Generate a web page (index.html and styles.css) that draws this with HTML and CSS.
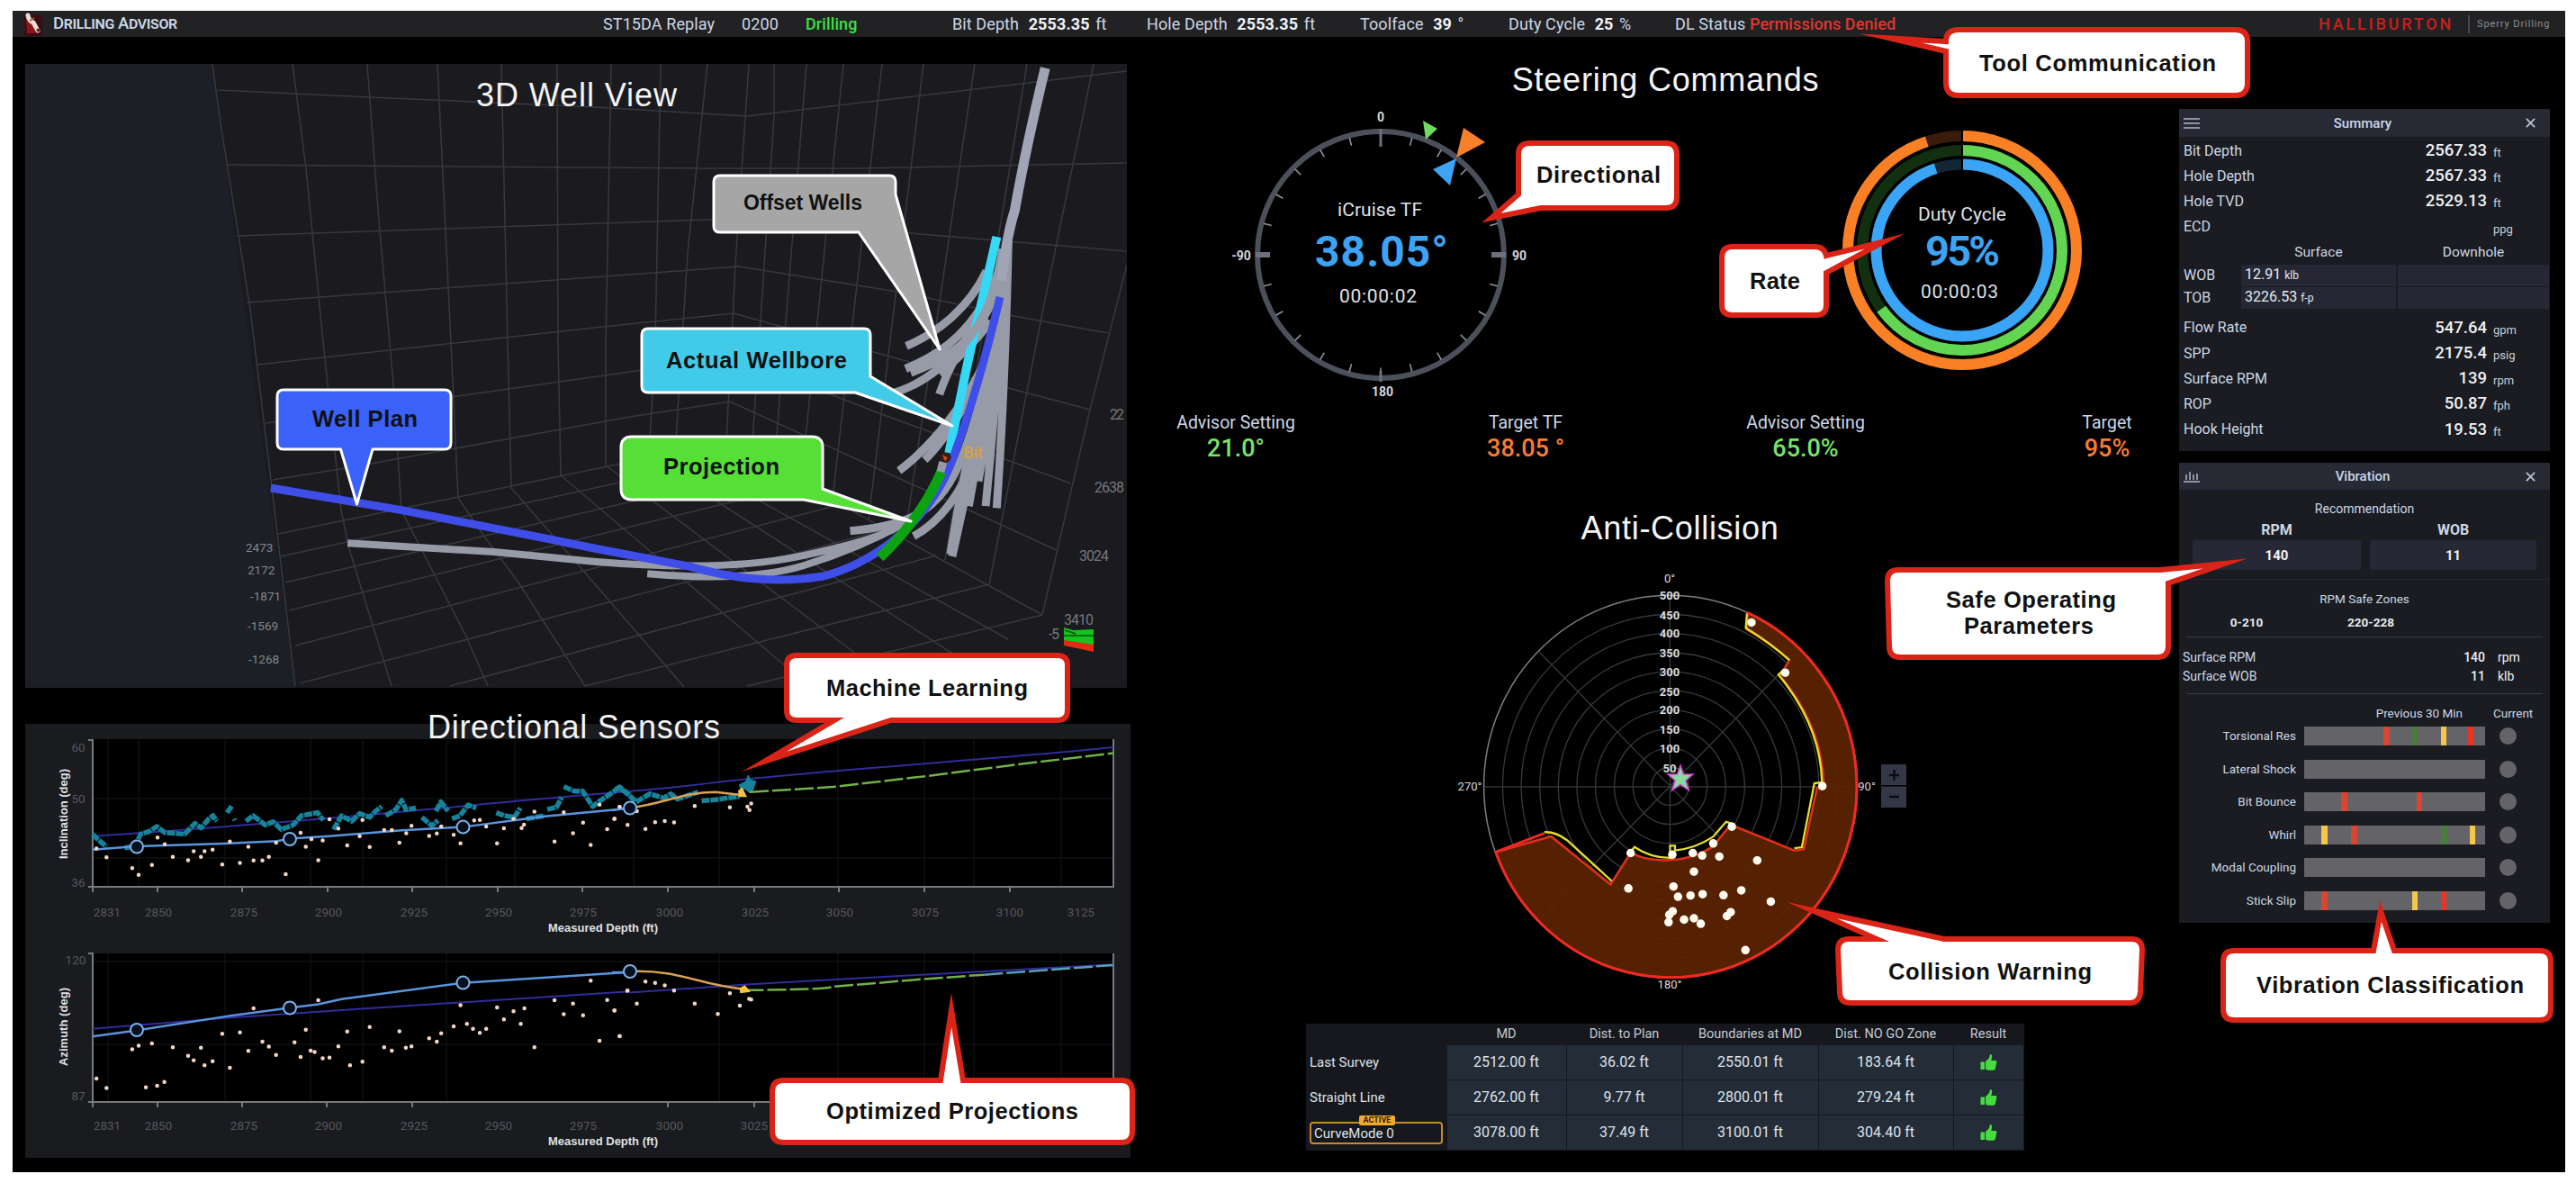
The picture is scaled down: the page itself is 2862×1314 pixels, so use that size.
FILE: index.html
```html
<!DOCTYPE html>
<html lang="en">
<head>
<meta charset="utf-8">
<title>Drilling Advisor</title>
<link rel="stylesheet" href="styles.css">
</head>
<body>
<svg class="defs" width="0" height="0" aria-hidden="true">
  <symbol id="thumb" viewBox="0 0 20 20"><path d="M1 9.5h4.5v8.5H1zM6.5 9.3L10.5 5 11.6 1q2.6.2 2 3.2L12.8 8H18q1.5.6.8 2l-1.4 7q-.4 1.700-2 1.700H9L6.500 17.500z"/></symbol>
</svg>
<div class="app">
  <header class="topbar">
    <svg class="logo" viewBox="0 0 25 29"><path fill="#3c0d10" d="M4 3l20 3v22H4z"/><path fill="#8a1518" d="M6 9l8 4 3 12H7z"/><path fill="none" stroke="#e9dcd6" stroke-width="5" stroke-linecap="round" d="M8 5q1 6 6 8l5 9"/><path stroke="#8c5c44" stroke-width="1.500" fill="none" d="M10 11l5-3"/><circle cx="19.500" cy="21.500" r="2" fill="#5a2a20"/></svg>
    <span class="brand">Drilling Advisor</span>
    <span>ST15DA Replay</span>
    <span>0200</span>
    <span class="ok">Drilling</span>
    <span>Bit Depth <b>2553.35</b> ft</span>
    <span>Hole Depth <b>2553.35</b> ft</span>
    <span>Toolface <b>39</b> °</span>
    <span>Duty Cycle <b>25</b> %</span>
    <span class="tight">DL Status <em>Permissions Denied</em></span>
    <span class="halliburton">HALLIBURTON</span>
    <span class="sperry">Sperry Drilling</span>
  </header>

  <main class="main">
    <section class="left">
      <svg class="well" viewBox="28 71 1224 693">
        <path class="well-side" d="M28 71H236L328 764H28z"/>
        <g class="mesh">
          <path d="M236 71L246 143 278 343 301 533 328 762M325 71L340 187 359 380 379 567 388 610 435 762M408 71L420 233 437 427 446 567 482 637 518 707 542 762M486 71L501 380 509 553 536 593 576 647 650 762M557 71L564 380 568 542 616 597 760 763M619 71L620 380 623 528 900 763M679 71L673 380V517L1000 763M734 71L728 380 721 508 1080 740M786 71L764 281 750 504 1120 710M832 71L817 294 807 491 1158 683"/>
          <path d="M860 71V129L835 506M896 71L860 520M937 71L890 536M980 71L925 554M1026 71L965 577M1083 71L1005 598M1141 71L1050 622M1215 71L1158 348 1099 649M1252 294L1211 455 1158 683"/>
          <path d="M242 100L411 108 660 119 830 129 1252 79M251 183L785 187H950L1252 181M263 262L785 244 820 242 999 258 1252 279M274 336L821 296 1003 325 1121 350 1231 370M286 405L660 364 815 348 1007 401 1211 455M295 470L700 413 813 395 974 458 1190 537M303 533L384 520 700 463 811 446 1174 611"/>
          <path d="M309 593L807 491M312 618L830 505M317 647L860 520M321 678L893 538M328 717L935 560M333 759L985 588M500 762L1040 617M650 762L1099 649M830 762L1158 683"/>
        </g>
        <g class="axis">
          <text x="273" y="613">2473</text><text x="275" y="638">2172</text><text x="278" y="667">-1871</text><text x="275" y="700">-1569</text><text x="276" y="737">-1268</text>
          <g class="axis-r"><text x="1233" y="466" textLength="16">22</text><text x="1216" y="547" textLength="33">2638</text><text x="1199" y="623" textLength="33">3024</text><text x="1182" y="694" textLength="33">3410</text><text x="1165" y="710" textLength="12">-5</text></g>
        </g>
        <path fill="#14c41c" d="M1182 697l10 3 23-1v14l-33 3z"/><path fill="#14c41c" d="M1182 706l33 6v5l-33-4z"/><path fill="#e32a12" d="M1182 711l33 5v8l-33-7z"/><path stroke="#074d0b" stroke-width="1.500" fill="none" d="M1182 706h33M1183 700l12 4"/>
        <g transform="translate(660 80) scale(.40816 .44643)">
          <g class="pipe">
            <path d="M1068 495C1020 590 930 650 850 682M1100 500C1040 640 950 700 848 738M1105 520C1050 670 960 715 862 748M1098 540C1040 680 900 790 780 805M1105 500C1070 600 985 680 940 802M1080 620C1030 680 970 730 940 750"/>
            <path d="M1075 700C1010 830 920 930 830 992M1050 760C980 880 940 930 900 965M1085 700C990 1040 960 1120 697 1142M1095 760C1050 1000 960 1110 870 1155"/>
            <path d="M1115 480C1090 700 1020 900 970 1200M1118 520C1085 720 1050 900 975 1205M1122 520Q1095 700 1020 1080M1120 450Q1110 700 1046 1018M1125 440Q1100 760 1066 1080M1128 420Q1118 800 1096 1085"/>
          </g>
          <path class="pipe thin" d="M-671 1172L-272 1194 0 1218Q350 1245 560 1205T830 1130M145 1248Q420 1270 570 1228T850 1120" />
          <path class="pipe cyan" d="M1096 410C1060 560 1020 700 1000 800L966 948"/>
          <path class="pipe plan" d="M1105 560Q1045 790 985 940C920 1130 740 1230 620 1255Q450 1280 260 1230L0 1185-118 1163-524 1090-880 1035"/>
          <path class="pipe" d="M1112 440C1090 570 1050 640 985 700"/>
          <path class="pipe wide" d="M1228 -10Q1175 190 1145 345 1125 400 1108 520"/>
          <path class="pipe proj" d="M945 995Q890 1110 778 1208"/>
          <path class="pipe" d="M950 970L943 995"/>
          <ellipse cx="957" cy="959" rx="15" ry="12" fill="#3a1f14"/><path fill="#e0521a" d="M948 952l14 8-6 8z"/>
        </g>
        <text x="1070" y="509" class="bit" textLength="22">Bit</text>
        <text class="title" x="529" y="118" textLength="223">3D Well View</text>
      </svg>

      <svg class="sensors" viewBox="28 804 1228 482">
        <path fill="#000" d="M103 821h1134v164H103zM103 1059h1134v165H103z"/>
        <path class="faint" d="M120 821v164M154 821v164M250 821v164M345 821v164M403 821v164M496 821v164M572 821v164M704 821v164M799 821v164M931 821v164M1027 821v164M1082 821v164M1179 821v164M103 887h1134M103 953h1134M120 1059v165M250 1059v165M345 1059v165M403 1059v165M496 1059v165M799 1059v165M931 1059v165M1027 1059v165M1082 1059v165M1179 1059v165M103 1068h1134M103 1160h1134"/>
        <path class="frame" d="M98 822h5v169M98 985h1139V821M175 985v6M269 985v6M364 985v6M458 985v6M553 985v6M647 985v6M742 985v6M838 985v6M932 985v6M1027 985v6M1122 985v6M98 1059h5v171M98 1224h1139V1059M175 1224v6M269 1224v6M363 1224v6M458 1224v6M742 1224v6M838 1224v6"/>
        <g class="tick">
          <text x="119" y="1018">2831</text><text x="176" y="1018">2850</text><text x="271" y="1018">2875</text><text x="365" y="1018">2900</text><text x="460" y="1018">2925</text><text x="554" y="1018">2950</text><text x="648" y="1018">2975</text><text x="744" y="1018">3000</text><text x="839" y="1018">3025</text><text x="933" y="1018">3050</text><text x="1028" y="1018">3075</text><text x="1122" y="1018">3100</text><text x="1201" y="1018">3125</text>
          <text x="119" y="1255">2831</text><text x="176" y="1255">2850</text><text x="271" y="1255">2875</text><text x="365" y="1255">2900</text><text x="460" y="1255">2925</text><text x="554" y="1255">2950</text><text x="648" y="1255">2975</text><text x="744" y="1255">3000</text><text x="838" y="1255">3025</text>
          <text x="87" y="835">60</text><text x="87" y="892">50</text><text x="87" y="985">36</text><text x="84" y="1071">120</text><text x="87" y="1222">87</text>
        </g>
        <g class="name">
          <text x="609" y="1035" textLength="122">Measured Depth (ft)</text><text x="609" y="1272" textLength="122">Measured Depth (ft)</text>
          <text transform="translate(75 954) rotate(-90)" textLength="100">Inclination (deg)</text><text transform="translate(75 1184) rotate(-90)" textLength="87">Azimuth (deg)</text>
        </g>
        <g transform="translate(0 780) scale(.44643 .3406)">
          <path class="line plan" d="M230 437Q700 395 1100 345T1568 292"/>
          <path class="ml" d="M230 430l20 25 15 15M310 475l25-5 15-40 20-8 20-17 20 20 50 5 25-35 15 15 20-30 10-10 10 18M565 360l12-22M583 380l2 5M612 388l18-18 15 15 15 15 20-10 20 25 30-15 20-30 40-10 15 25M830 415l20-45 25 18 20-25 25 12 15-20 15-15M960 370l25-20 15-30 10 30 25-5M1050 375l25 28 15-18M1085 355l12-30 18 30M1125 380l20-10 20-35 20 10M1235 360l20 10 25 5 15-30M1310 380l45-10M1362 350l23-8 13-32M1403 275l27 15 20 0 25 50 20-20 45-40 28 20"/>
          <path class="line survey" d="M230 481L340 470 540 462 690 453 720 445 820 437 1000 418 1152 407 1350 373 1568 346"/>
          <path class="line plan" d="M230 1065L560 1030 900 1000 1568 943"/>
          <path class="line survey" d="M230 1090L340 1070 560 1025 720 997 792 985 850 968 1152 915 1568 880"/>
          <path class="dots" d="M240 477h.1M265 506h.1M329 541h.1M345 563h.1M378 531h.1M392 441h.1M410 463h.1M430 504h.1M468 515h.1M482 486h.1M500 504h.1M509 486h.1M529 481h.1M553 529h.1M572 454h.1M597 524h.1M618 471h.1M631 516h.1M653 516h.1M669 504h.1M687 458h.1M711 561h.1M748 426h.1M761 471h.1M775 446h.1M792 515h.1M803 451h.1M820 382h.1M864 467h.1M842 412h.1M902 384h.1M895 437h.1M920 472h.1M956 417h.1M975 417h.1M994 458h.1M1011 427h.1M1024 403h.1M1068 436h.1M1087 428h.1M1098 405h.1M1129 432h.1M1146 460h.1M1180 385h.1M1194 384h.1M1210 405h.1M1237 460h.1M1254 411h.1M1278 380h.1M1298 410h.1M1304 399h.1M1330 357h.1M1380 454h.1M1403 359h.1M1426 427h.1M1451 393h.1M1470 465h.1M1492 334h.1M1511 414h.1M1529 381h.1M1542 341h.1"/>
          <path class="dots" d="M240 1227h.1M265 1258h.1M329 1132h.1M345 1120h.1M363 1256h.1M378 1113h.1M391 1251h.1M409 1238h.1M430 1125h.1M468 1153h.1M482 1168h.1M500 1127h.1M509 1184h.1M529 1171h.1M553 1081h.1M572 1192h.1M597 1077h.1M618 1137h.1M631 998h.1M653 1107h.1M669 1123h.1M687 1150h.1M733 1109h.1M748 1157h.1M761 1068h.1M773 1136h.1M783 1141h.1M792 972h.1M803 1161h.1M820 1159h.1M842 1122h.1M864 1074h.1M871 1184h.1M902 1172h.1M920 1059h.1M956 1125h.1M975 1136h.1M994 1073h.1M1010 1127h.1M1024 1122h.1M1068 1096h.1M1087 1107h.1M1098 1080h.1M1129 1057h.1M1146 988h.1M1162 1049h.1M1177 1065h.1M1194 1078h.1M1210 1065h.1M1237 995h.1M1254 1034h.1M1278 1008h.1M1296 1049h.1M1305 998h.1M1330 1125h.1M1380 972h.1M1403 1017h.1M1426 983h.1M1451 1021h.1M1470 908h.1M1492 1104h.1M1511 971h.1M1529 1005h.1M1542 1089h.1M1561 941h.1"/>
        </g>
        <g transform="translate(680 700) scale(.38265)">
          <path class="line plan" d="M50 467Q150 460 300 442T900 388 1455 340M50 1052L400 1028 900 1000 1455 970"/>
          <path class="line survey" d="M50 515L0 523M0 993H53"/>
          <path class="ml" d="M10 462L22 455 70 498 110 475 150 487 170 475 190 490 250 470M260 495L300 492 370 482"/><path fill="#16839a" d="M368 448l20-10 7-20 8 15 16 5-8 25-12 10-14-12-12 5z"/>
          <path class="line curve" d="M53 515C150 505 200 470 300 470L375 478M53 990C200 985 250 1030 385 1042"/>
          <path class="line green" d="M400 470L640 455 900 425 1200 387 1455 357M385 1045Q620 1043 640 1035L900 1013 1080 1000"/>
          <path class="line green teal" d="M1080 1000L1455 972"/>
          <path fill="#f5c242" d="M366 466l12-10 14 28h-24zM370 1038l16-8 16 20-30 4z"/>
          <path class="dots" d="M7 547h.1M45 565h.1M72 525h.1M97 577h.1M125 557h.1M153 554h.1M180 558h.1M240 510h.1M342 514h.1M393 512h.1M399 522h.1M404 503h.1M22 513h.1M7 1104h.1M22 1178h.1M45 1046h.1M72 1084h.1M97 1020h.1M125 1024h.1M153 1031h.1M180 1046h.1M240 1084h.1M307 1114h.1M342 1054h.1M371 1090h.1M398 1070h.1M404 1072h.1"/>
        </g>
        <g class="node"><circle cx="152" cy="940.500" r="7"/><circle cx="322" cy="932" r="7"/><circle cx="514.500" cy="918.600" r="7"/><circle cx="700" cy="897.500" r="7"/><circle cx="152" cy="1144" r="7"/><circle cx="322" cy="1119.500" r="7"/><circle cx="514.500" cy="1091.600" r="7"/><circle cx="700" cy="1079" r="7"/></g>
        <text class="title" x="475" y="820" textLength="325">Directional Sensors</text>
      </svg>
    </section>

    <section class="center">
      <h2 class="steering">Steering Commands</h2>
      <svg class="gauges" viewBox="1256 108 1165 338">
        <circle cx="1534" cy="283" r="137" fill="none" stroke="#4b505b" stroke-width="6"/>
        <circle cx="1534" cy="283" r="130" fill="none" stroke="#8d919b" stroke-width="9" pathLength="360" stroke-dasharray=".7 14.3" stroke-dashoffset=".35"/>
        <path stroke="#6b707b" stroke-width="3" d="M1534 143v20M1534 424v-12"/><path stroke="#6b707b" stroke-width="6" d="M1395 283h16M1657 283h16"/>
        <path fill="#6edc5f" d="M1581 134l16 9-13 12z"/><path fill="#f8802a" d="M1626 142l24 16-32 17z"/><path fill="#3da3f5" d="M1592 188l26-12-7 30z"/>
        <g class="glab"><text x="1534" y="135">0</text><text x="1688" y="289">90</text><text x="1379" y="289">-90</text><text x="1536" y="440">180</text></g>
        <g class="gtext"><text x="1486" y="240" textLength="94">iCruise TF</text><text class="big" x="1461" y="296" textLength="148">38.05°</text><text x="1488" y="336" textLength="86">00:00:02</text>
        <text x="2131" y="245" textLength="98">Duty Cycle</text><text class="big duty" x="2139" y="295" textLength="83">95%</text><text x="2134" y="331" textLength="86">00:00:03</text></g>
        <g class="ring" transform="rotate(-90 2180 278)">
          <circle cx="2180" cy="278" r="127" stroke="#3b1c0b"/><circle cx="2180" cy="278" r="111" stroke="#12300f"/><circle cx="2180" cy="278" r="95.500" stroke="#122634"/>
          <circle cx="2180" cy="278" r="127" stroke="#fa8026" pathLength="100" stroke-dasharray="95 5"/><circle cx="2180" cy="278" r="111" stroke="#62d653" pathLength="100" stroke-dasharray="65 35"/><circle cx="2180" cy="278" r="95.500" stroke="#3aa5f7" pathLength="100" stroke-dasharray="95 5"/>
        </g>
        <path stroke="#000" stroke-width="2" d="M2180 143v46"/>
      </svg>
      <div class="readings">
        <div>Advisor Setting<b class="green">21.0°</b></div>
        <div>Target TF<b class="orange">38.05 °</b></div>
        <div>Advisor Setting<b class="green">65.0%</b></div>
        <div>Target<b class="orange">95%</b></div>
      </div>
      <h2 class="anti">Anti-Collision</h2>
      <svg class="polar" viewBox="1256 616 1165 500">
        <g transform="translate(1560 560) scale(.42088 .35714)">
          <g id="rings" class="rings">
            <ellipse cx="702" cy="877" rx="49" ry="59.400"/><ellipse cx="702" cy="877" rx="98" ry="118.700"/><ellipse cx="702" cy="877" rx="147" ry="178"/><ellipse cx="702" cy="877" rx="197" ry="237"/><ellipse cx="702" cy="877" rx="246" ry="297"/><ellipse cx="702" cy="877" rx="295" ry="356"/><ellipse cx="702" cy="877" rx="344" ry="415"/><ellipse cx="702" cy="877" rx="393" ry="475"/><ellipse cx="702" cy="877" rx="442" ry="534"/>
            <path d="M210 879H1193M702 283V1470M355 457L1049 1297M1049 457L355 1297"/>
          </g>
          <ellipse class="rim" cx="702" cy="877" rx="491.500" ry="593.500"/>
          <path class="zone" d="M907 338A491.500 593.500 0 1 1 242 1082L388 1033 545 1183 598 1085Q640 1110 702 1107T815 1065L862 997 1030 1077 1055 1073 1090 883H1108Q1106 690 992 535L1017 485Q970 435 905 390z"/>
          <path class="limit" d="M370 1020Q400 1018 430 1045L548 1172M598 1082L608 1066Q650 1100 702 1100V1062H715V1077Q770 1070 815 1035L850 988 868 994M1030 1070L1050 1067 1083 868 1103 865Q1100 690 988 530L1003 515M1017 485Q965 430 902 385L905 340"/>
          <path class="rimred" d="M907 338A491.500 593.500 0 1 1 242 1082L370 1024"/>
          <path class="hits" d="M917 368h.1M1006 524h.1M1104 877h.1M865 1003h.1M816 1055h.1M598 1085h.1M708 1090h.1M762 1085h.1M787 1093h.1M832 1096h.1M932 1108h.1M765 1143h.1M592 1195h.1M711 1189h.1M723 1221h.1M756 1217h.1M788 1213h.1M843 1216h.1M890 1201h.1M968 1236h.1M709 1266h.1M700 1277h.1M698 1300h.1M739 1292h.1M765 1288h.1M783 1305h.1M852 1281h.1M862 1269h.1M901 1387h.1"/>
        </g>
        <path class="star" d="M1867 850l3.500 10h10.500l-8 7 3.500 11-9.500-6.500-9.500 6.500 3.500-11-8-7h10.500z"/>
        <g class="rlab"><text x="1855" y="647" class="deg">0°</text><text x="1855" y="666">500</text><text x="1855" y="688">450</text><text x="1855" y="708">400</text><text x="1855" y="730">350</text><text x="1855" y="751">300</text><text x="1855" y="773">250</text><text x="1855" y="793">200</text><text x="1855" y="815">150</text><text x="1855" y="836">100</text><text x="1855" y="858">50</text><text class="deg" x="1633" y="878">270°</text><text class="deg" x="2074" y="878">90°</text><text class="deg" x="1855" y="1098">180°</text></g>
        <path fill="#343846" d="M2090 849h28v23h-28zM2090 873.500h28V897h-28z"/><path stroke="#0c0d12" stroke-width="2.500" d="M2099 861h11M2104.500 855v12M2099 885h11"/>
      </svg>
      <table class="plan-table">
        <tr><th></th><th>MD</th><th>Dist. to Plan</th><th>Boundaries at MD</th><th>Dist. NO GO Zone</th><th>Result</th></tr>
        <tr><td>Last Survey</td><td>2512.00 ft</td><td>36.02 ft</td><td>2550.01 ft</td><td>183.64 ft</td><td><svg><use href="#thumb"/></svg></td></tr>
        <tr><td>Straight Line</td><td>2762.00 ft</td><td>9.77 ft</td><td>2800.01 ft</td><td>279.24 ft</td><td><svg><use href="#thumb"/></svg></td></tr>
        <tr><td><div class="mode">CurveMode 0<i>ACTIVE</i></div></td><td>3078.00 ft</td><td>37.49 ft</td><td>3100.01 ft</td><td>304.40 ft</td><td><svg><use href="#thumb"/></svg></td></tr>
      </table>
    </section>

    <aside class="right">
      <section class="panel summary">
        <h3><svg viewBox="0 0 18 14"><path stroke="#8f94a3" stroke-width="2" d="M0 2h18M0 7h18M0 12h18"/></svg>Summary<svg class="x" viewBox="0 0 12 12"><path stroke="#b9c0cf" stroke-width="2" d="M1 1l10 10M11 1L1 11"/></svg></h3>
        <dl class="rows">
          <dt>Bit Depth</dt><dd>2567.33</dd><dd>ft</dd>
          <dt>Hole Depth</dt><dd>2567.33</dd><dd>ft</dd>
          <dt>Hole TVD</dt><dd>2529.13</dd><dd>ft</dd>
          <dt>ECD</dt><dd></dd><dd>ppg</dd>
        </dl>
        <div class="cells">
          <span></span><span class="ch">Surface</span><span class="ch">Downhole</span>
          <span>WOB</span><span class="cell">12.91 <small>klb</small></span><span class="cell"></span>
          <span>TOB</span><span class="cell">3226.53 <small>f-p</small></span><span class="cell"></span>
        </div>
        <dl class="rows">
          <dt>Flow Rate</dt><dd>547.64</dd><dd>gpm</dd>
          <dt>SPP</dt><dd>2175.4</dd><dd>psig</dd>
          <dt>Surface RPM</dt><dd>139</dd><dd>rpm</dd>
          <dt>ROP</dt><dd>50.87</dd><dd>fph</dd>
          <dt>Hook Height</dt><dd>19.53</dd><dd>ft</dd>
        </dl>
      </section>
      <section class="panel vibration">
        <h3><svg viewBox="0 0 18 14"><path stroke="#8f94a3" stroke-width="2" d="M0 13h18M3 5v6M7 2v9M11 5v6M15 4v7"/></svg>Vibration<svg class="x" viewBox="0 0 12 12"><path stroke="#b9c0cf" stroke-width="2" d="M1 1l10 10M11 1L1 11"/></svg></h3>
        <p class="rec">Recommendation</p>
        <div class="setpoints"><label>RPM<output>140</output></label><label>WOB<output>11</output></label></div>
        <div class="zones"><p>RPM Safe Zones</p><span>0-210</span><span>220-228</span></div>
        <dl class="surface"><dt>Surface RPM</dt><dd>140</dd><dd>rpm</dd><dt>Surface WOB</dt><dd>11</dd><dd>klb</dd></dl>
        <div class="vib">
          <span></span><span class="vh">Previous 30 Min</span><span class="vc">Current</span>
          <span>Torsional Res</span><div class="bar"><i class="r" style="left:44%"></i><i class="g" style="left:59.500%"></i><i class="y" style="left:75.500%"></i><i class="r hot" style="left:90.500%"></i></div><b></b>
          <span>Lateral Shock</span><div class="bar"></div><b></b>
          <span>Bit Bounce</span><div class="bar"><i class="r" style="left:20.500%"></i><i class="r" style="left:62%"></i></div><b></b>
          <span>Whirl</span><div class="bar"><i class="y" style="left:9.500%"></i><i class="r" style="left:26%"></i><i class="g" style="left:76%"></i><i class="y" style="left:91.500%"></i></div><b></b>
          <span>Modal Coupling</span><div class="bar"></div><b></b>
          <span>Stick Slip</span><div class="bar"><i class="r" style="left:9.500%"></i><i class="y" style="left:59.500%"></i><i class="r hot" style="left:75.500%"></i></div><b></b>
        </div>
      </section>
    </aside>
  </main>

  <svg class="callouts" viewBox="14 12 2836 1290">
    <g class="soft">
      <path fill="#a6a6a6" d="M800 195H988Q995 195 995 202V216L1044 388 954 258H800Q793 258 793 251V202Q793 195 800 195z"/>
      <path fill="#42cbe9" d="M720 365H960Q967 365 967 372V418L1058 473 950 436H720Q713 436 713 429V372Q713 365 720 365z"/>
      <path fill="#56df37" d="M702 485H902Q914 485 914 497V543L1012 579 893 555H702Q690 555 690 543V497Q690 485 702 485z"/>
      <path fill="#3a62fa" d="M315 433H494Q501 433 501 440V492Q501 499 494 499H414L396.500 560 378.500 499H315Q308 499 308 492V440Q308 433 315 433z"/>
    </g>
    <g class="hard">
      <path d="M885 728H1175Q1186 728 1186 739V789Q1186 800 1175 800H990L849 846 927 800H885Q874 800 874 789V739Q874 728 885 728z"/>
      <path d="M871 1200H1045L1057 1122 1070 1200H1246Q1258 1200 1258 1212V1257Q1258 1269 1246 1269H871Q858 1269 858 1257V1212Q858 1200 871 1200z"/>
      <path d="M2176 33H2484Q2497 33 2497 46V92Q2497 106 2484 106H2176Q2162 106 2162 92V57L2100 42.500 2162 46Q2162 33 2176 33z"/>
      <path d="M1700 159H1851Q1863 159 1863 171V219Q1863 231 1851 231H1712L1657 242 1687 216V171Q1687 159 1700 159z"/>
      <path d="M1925 274H2016Q2027 274 2029 284L2094 268 2029 303V339Q2029 350 2018 350H1925Q1913 350 1913 339V286Q1913 274 1925 274z"/>
      <path d="M2109 633H2400L2472 626 2409 648V718Q2409 730 2397 730H2111Q2099 730 2099 718L2097 645Q2097 633 2109 633z"/>
      <path d="M2054 1043H2085L2013 1011 2160 1043H2368Q2380 1043 2380 1055L2378 1102Q2377 1114 2366 1114H2056Q2044 1114 2044 1102L2042 1055Q2042 1043 2054 1043z"/>
      <path d="M2482 1056H2637L2645 1012 2660 1056H2822Q2834 1056 2834 1068V1121Q2834 1133 2822 1133H2482Q2470 1133 2470 1121V1068Q2470 1056 2482 1056z"/>
    </g>
    <g class="ctext">
      <text x="826" y="233" textLength="132" class="sm">Offset Wells</text>
      <text x="740" y="409" textLength="201">Actual Wellbore</text>
      <text x="737" y="527" textLength="129">Projection</text>
      <text x="347" y="474" textLength="117">Well Plan</text>
      <text x="918" y="773" textLength="224">Machine Learning</text>
      <text x="918" y="1243" textLength="280">Optimized Projections</text>
      <text x="2199" y="79" textLength="263">Tool Communication</text>
      <text x="1707" y="203" textLength="138">Directional</text>
      <text x="1944" y="321" textLength="56">Rate</text>
      <text x="2162" y="675" textLength="189">Safe Operating</text>
      <text x="2182" y="704" textLength="144">Parameters</text>
      <text x="2098" y="1088" textLength="226">Collision Warning</text>
      <text x="2507" y="1103" textLength="297">Vibration Classification</text>
    </g>
  </svg>
</div>
</body>
</html>
```
FILE: styles.css
```css
* { box-sizing: border-box; }
body { margin: 0; background: #fff; font-family: Roboto, "Liberation Sans", sans-serif; color: #ccd7e6; }
h2, h3, p, dl, dd { margin: 0; font-weight: 400; }
svg { display: block; }
.defs { position: absolute; }
.app { position: relative; width: 2836px; height: 1290px; margin: 12px 12px 12px 14px; background: #000; overflow: hidden; }

.topbar { display: grid; height: 29px; align-items: center; font-size: 18px; white-space: nowrap; background: #222224; letter-spacing: .1px;
  grid-template-columns: 45px 611px 154px 71px 163px 216px 237px 165px 185px 715px 175px 99px; }
.topbar > span { line-height: 29px; }
.topbar b { font-weight: 700; color: #eef2f7; margin: 0 2px 0 6px; }
.topbar em { font-style: normal; font-weight: 500; color: #e0362f; letter-spacing: .1px; }
.logo { width: 25px; height: 29px; margin-left: 9px; }
.brand { font-variant: small-caps; font-weight: 500; font-size: 18.500px; letter-spacing: -.35px; }
.ok { color: #3be043; font-weight: 500; }
.halliburton { color: #c9201c; font-weight: 500; font-size: 18px; letter-spacing: 2.800px; }
.sperry { font-size: 11px; color: #8b8e95; border-left: 2px solid #45484d; padding-left: 8px; letter-spacing: .9px; line-height: 20px !important; margin-left: -9px; }

.main { display: grid; grid-template-columns: 1228px 1165px 412px; padding-left: 14px; }
.left { padding-top: 30px; }
.well { width: 1224px; height: 693px; background: #1a1a1f; }
.well-side { fill: #1c1f25; }
.mesh path { fill: none; stroke: #37393d; stroke-width: 1.500; }
.axis text { font-size: 13.500px; fill: #85878c; }
.axis .axis-r text { font-size: 16px; fill: #75787d; }
.pipe { fill: none; stroke: #979ba8; stroke-width: 9; }
.pipe path { stroke: #979ba8; }
.pipe, .pipe path, .line, .ml, .dots, .rings *, .rim, .zone, .limit, .rimred, .hits { vector-effect: non-scaling-stroke; }
.pipe.thin { stroke-width: 8; }
.wide { stroke-width: 11; stroke: #a0a4b4; }
.cyan { stroke: #35d8f5; stroke-width: 10; }
.pipe.plan { stroke: #3f4ee8; stroke-width: 9; }
.proj { stroke: #0ca312; stroke-width: 11; }
.bit { font-size: 19px; font-weight: 500; fill: #d8a04a; }
.title { font: 36px "Liberation Sans", Arial, sans-serif; fill: #f4f4f4; }

.sensors { width: 1228px; height: 482px; margin-top: 40px; background: #1a1b1f; overflow: visible; }
.faint { stroke: #151618; stroke-width: 1; }
.frame { fill: none; stroke: #77797d; stroke-width: 2; }
.tick text { font-size: 13.500px; fill: #55575c; text-anchor: middle; }
.name text { font: 700 13px "Liberation Sans", Arial, sans-serif; fill: #dfe1e4; }
.line { fill: none; stroke-width: 2; }
.line.plan { stroke: #312c9c; }
.survey { stroke: #5a94dc; stroke-width: 2.500; }
.curve { stroke: #d9a154; stroke-width: 2.500; }
.green { stroke: #72b04a; }
.line.green { stroke-dasharray: 21 4; stroke-width: 2.500; }
.line.green.teal { stroke: #5aa0b4; }
.ml { fill: none; stroke: #17839b; stroke-width: 5.500; stroke-linejoin: round; stroke-dasharray: 9 1; }
.dots { fill: none; stroke: #f3d6c4; stroke-width: 4.500; stroke-linecap: round; }
.node circle { fill: #04101f; stroke: #7fb0e6; stroke-width: 2; }

.center { display: flex; flex-direction: column; font-size: 20px; }
.center h2 { font: 36px/40px "Liberation Sans", Arial, sans-serif; color: #f4f4f4; text-align: center; }
.center .steering { margin-top: 28px; margin-bottom: -1px; padding-left: 24px; letter-spacing: .8px; }
.center .anti { margin-top: 46px; margin-bottom: -1px; padding-left: 56px; letter-spacing: .7px; }
.gauges { width: 1165px; height: 338px; }
.glab text { font-size: 14px; font-weight: 700; fill: #d3d6da; text-anchor: middle; }
.gtext text { font-size: 21px; fill: #dde2e8; }
.gtext .big { font-size: 48px; font-weight: 700; fill: #3da3f5; }
.gtext .duty { font-size: 47px; }
.ring circle { fill: none; stroke-width: 12; }
.readings { display: grid; grid-template-columns: 322px 311px 335px 160px; margin-left: 37px; padding-top: 12px; height: 75px; font-size: 19.500px; line-height: 24px; white-space: nowrap; }
.readings div { width: 160px; text-align: center; }
.readings b { display: block; font-size: 27px; font-weight: 500; line-height: 32px; }
.readings .green { color: #7ae26a; }
.readings .orange { color: #fb7b35; }
.polar { width: 1165px; height: 500px; margin-top: 10px; }
.rings * { fill: none; stroke: #38393b; stroke-width: 1.300; }
.rim { fill: none; stroke: #7d7f82; stroke-width: 1.500; }
.zone { fill: #5c2302; fill-opacity: .93; stroke: #e0301a; stroke-width: 2.500; }
.limit { fill: none; stroke: #e6df2e; stroke-width: 2.300; }
.rimred { fill: none; stroke: #ee2a22; stroke-width: 3; }
.hits { fill: none; stroke: #fffbee; stroke-width: 9.500; stroke-linecap: round; }
.star { fill: #86dca0; stroke: #d63fd0; stroke-width: 1.500; }
.rlab text { font-size: 13px; font-weight: 700; fill: #d8dadd; text-anchor: middle; }
.rlab .deg { font-weight: 400; }

.plan-table { width: 797px; height: 141px; margin: 21px 0 0 195px; table-layout: fixed; border-collapse: collapse; background: #16181d; font-size: 16px; text-align: center; color: #dde3ea; white-space: nowrap; }
.plan-table td, .plan-table th { padding: 0; }
.plan-table th { height: 23px; width: 150px; font-size: 14.500px; font-weight: 400; color: #c4cbd5; }
.plan-table th:nth-child(1) { width: 156px; } .plan-table th:nth-child(2) { width: 133px; } .plan-table th:nth-child(3) { width: 129px; } .plan-table th:nth-child(4) { width: 151px; } .plan-table th:nth-child(6) { width: 78px; }
.plan-table td { height: 39px; background: #242c38; border: 1px solid #141920; }
.plan-table td:first-child { background: none; border: 0; text-align: left; padding-left: 4px; font-size: 15px; }
.plan-table td svg { width: 21px; height: 20px; margin: auto; fill: #46dc41; }
.mode { position: relative; width: 148px; height: 25px; border: 2px solid #c48a2c; border-radius: 4px; padding-left: 3px; line-height: 22px; margin-top: 2px; }
.mode i { position: absolute; left: 53px; top: -9px; width: 40px; height: 11px; border-radius: 2px; background: #f3aa2e; color: #2c1f08; font: 700 9px/11px Roboto, sans-serif; text-align: center; }

.right { padding-top: 80px; }
.panel { background: #1a1c21; }
.panel h3 { display: flex; justify-content: space-between; align-items: center; height: 31px; padding: 0 16px 0 5px; background: #272a35; font-size: 15px; font-weight: 500; }
.panel h3 svg { width: 18px; height: 14px; }
.panel h3 .x { width: 11px; height: 11px; }
.summary { height: 380px; font-size: 16px; }
.rows { display: grid; grid-template-columns: 1fr 120px 68px; grid-auto-rows: 28.200px; padding: 0 2px 0 5px; align-items: center; }
.summary .rows { padding-top: 1px; }
.rows dd { text-align: right; font-size: 18.500px; font-weight: 500; color: #eef1f5; }
.rows dd:nth-of-type(2n) { text-align: left; padding-left: 7px; font-size: 13px; font-weight: 400; padding-top: 5px; color: #c8ced8; }
.cells { display: grid; grid-template-columns: 62px 172px 168px; column-gap: 2px; grid-template-rows: 26px 25px 25px; padding: 1px 0 4px 5px; margin-top: 1px; font-size: 16px; line-height: 24px; height: 82px; }
.cells .ch { text-align: center; font-size: 15.500px; }
.cells .cell { background: #252834; margin-bottom: 1px; padding-left: 4px; color: #e6eaf0; line-height: 22px; }
.cells small { font-size: 12px; }
.vibration { margin-top: 13px; height: 511px; font-size: 14px; }
.vibration h3 { height: 30px; }
.rec { text-align: center; padding-top: 11px; line-height: 20px; }
.setpoints { display: grid; grid-template-columns: 187px 185px; gap: 10px; padding: 2px 15px 11px; border-bottom: 1px solid #23262c; height: 69px; }
.setpoints label { text-align: center; font-size: 16px; font-weight: 700; line-height: 23px; }
.setpoints output { display: block; height: 33px; line-height: 35px; border-radius: 3px; background: #262935; color: #f0f2f5; font-size: 15px; }
.zones { display: grid; grid-template-columns: 134px 132px 1fr; height: 64px; margin: 0 8px; border-bottom: 1px solid #3a3c40; line-height: 20px; padding-top: 11px; text-align: center; font-size: 13.500px; }
.zones p { grid-column: 1 / 4; line-height: 20px; }
.zones span { font-weight: 700; color: #e8ebef; }
.zones span:nth-child(3) { padding-left: 10px; white-space: nowrap; }
.surface { display: grid; grid-template-columns: 1fr 100px 64px; grid-auto-rows: 21px; line-height: 21px; height: 63px; margin: 0 8px; border-bottom: 1px solid #3a3c40; padding-top: 12px; }
.surface dt { margin-left: -4px; }
.surface dd { text-align: right; color: #eef1f5; font-weight: 500; }
.surface dd:nth-of-type(2n) { text-align: left; padding-left: 14px; font-weight: 400; }
.vib { display: grid; grid-template-columns: 130px 201px 60px; column-gap: 9px; grid-template-rows: 9.500px repeat(6, 21px); row-gap: 15.500px; padding-top: 11px; font-size: 13.500px; line-height: 21px; }
.vib > span { text-align: right; white-space: nowrap; }
.vib .vh { padding-right: 25px; }
.vib .vc { text-align: left; }
.bar { position: relative; height: 21px; background: #646468; }
.bar i { position: absolute; top: 0; width: 3.200%; height: 100%; }
.bar .r { background: #d9452f; } .bar .hot { background: #ef3322; } .bar .g { background: #4a7c3c; } .bar .y { background: #f4c64a; }
.vib b { width: 19px; height: 19px; margin: 1px 0 0 7px; border-radius: 50%; background: #646468; }

/* annotation layer drawn over the dashboard */
.callouts { position: absolute; inset: 0; width: 2836px; height: 1290px; }
.soft path { stroke: #fff; stroke-width: 3; stroke-linejoin: round; }
.hard path { fill: #fff; stroke: #da2417; stroke-width: 6; stroke-miterlimit: 30; }
.ctext text { font: 700 25.500px "Liberation Sans", Arial, sans-serif; fill: #111; }
.ctext .sm { font-size: 23px; }
```
